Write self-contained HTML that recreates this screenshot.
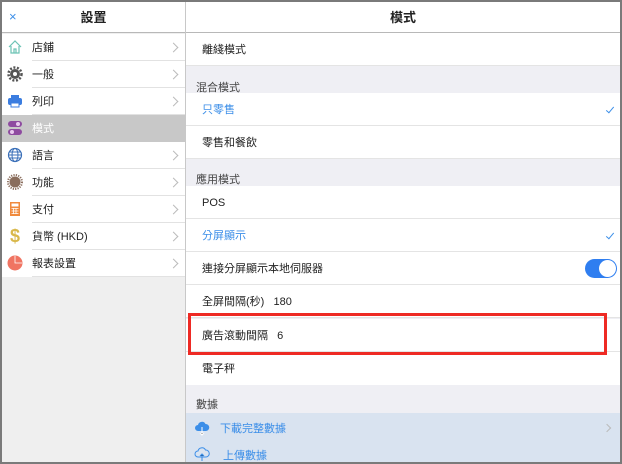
<!DOCTYPE html>
<html><head><meta charset="utf-8"><style>
*{margin:0;padding:0;box-sizing:border-box}
body{width:622px;height:464px;background:#7a7a7a;font-family:"Liberation Sans","Noto Sans CJK TC",sans-serif;font-size:11px;color:#222;position:relative;overflow:hidden}
.a{position:absolute}
#L{left:2px;top:2px;width:183px;height:460px;background:#efefef}
#R{left:186px;top:2px;width:434px;height:460px;background:#efeff4}
.hd{position:absolute;left:0;top:0;width:100%;height:31px;background:#fff;border-bottom:1px solid #b8b8b8;text-align:center;line-height:31px;font-size:13px;font-weight:bold;color:#222}
.lr{position:absolute;left:0;width:183px;height:27px;background:#fff}
.lr .t{position:absolute;left:30px;top:1px;line-height:27px}
.lr .ln{position:absolute;left:30px;right:0;bottom:0;border-bottom:1px solid #e2e2e2}
.lr .ch{position:absolute;right:8px;top:10px;width:7px;height:7px;border-right:1px solid #bbb;border-top:1px solid #bbb;transform:rotate(45deg)}
.lr .ic{position:absolute;left:5px;top:5px;width:16px;height:16px}
.rr{position:absolute;left:0;width:434px;height:33px;background:#fff;border-bottom:1px solid #e4e4e4}
.rr .t{position:absolute;left:16px;top:1px;line-height:33px}
.sh{position:absolute;left:10px;color:#444}
.blue{color:#3b8ee8}
.ck{position:absolute;right:8px;top:12px;width:4px;height:8px;border-right:1.5px solid #3b8ee8;border-bottom:1.5px solid #3b8ee8;transform:rotate(40deg)}
</style></head><body>
<div id="L" class="a">
 <div class="hd">設置</div>
 <div class="a" style="left:7px;top:7px;color:#3b8ee8;font-size:13px">×</div>
 <div class="lr" style="top:32px"><svg class="ic" viewBox="0 0 16 16"><path d="M2 8L8 2l6 6M4 7v7h8V7M7 14v-4h2v4" fill="none" stroke="#6cc3b5" stroke-width="1.2"/></svg><span class="t">店鋪</span><span class="ch"></span><span class="ln"></span></div>
 <div class="lr" style="top:59px"><svg class="ic" viewBox="0 0 16 16"><circle cx="8" cy="8" r="5" fill="#555"/><circle cx="8" cy="8" r="6.5" fill="none" stroke="#555" stroke-width="2.5" stroke-dasharray="2 1.6"/><circle cx="8" cy="8" r="2" fill="#fff"/></svg><span class="t">一般</span><span class="ch"></span><span class="ln"></span></div>
 <div class="lr" style="top:86px"><svg class="ic" viewBox="0 0 16 16"><rect x="4" y="2" width="8" height="4" fill="#3b7de0"/><rect x="1" y="5" width="14" height="7" rx="2" fill="#3b7de0"/><rect x="4" y="10" width="8" height="4" fill="#fff" stroke="#3b7de0"/></svg><span class="t">列印</span><span class="ch"></span><span class="ln"></span></div>
 <div class="lr" style="top:113px;background:#c8c8c8"><svg class="ic" viewBox="0 0 16 16"><rect x="1" y="1" width="14" height="6" rx="3" fill="#8e4aa0"/><rect x="1" y="9" width="14" height="6" rx="3" fill="#8e4aa0"/><circle cx="11" cy="4" r="2" fill="#e9c9ef"/><circle cx="5" cy="12" r="2" fill="#e9c9ef"/></svg><span class="t" style="color:#fff">模式</span></div>
 <div class="lr" style="top:140px"><svg class="ic" viewBox="0 0 16 16"><circle cx="8" cy="8" r="6.5" fill="none" stroke="#3a6fb8" stroke-width="1.2"/><ellipse cx="8" cy="8" rx="3" ry="6.5" fill="none" stroke="#3a6fb8"/><path d="M1.5 8h13M2.5 5h11M2.5 11h11" stroke="#3a6fb8"/></svg><span class="t">語言</span><span class="ch"></span><span class="ln"></span></div>
 <div class="lr" style="top:167px"><svg class="ic" viewBox="0 0 16 16"><circle cx="8" cy="8" r="5.5" fill="#8a6d5c"/><circle cx="8" cy="8" r="7" fill="none" stroke="#8a6d5c" stroke-width="2" stroke-dasharray="1.2 1.2"/></svg><span class="t">功能</span><span class="ch"></span><span class="ln"></span></div>
 <div class="lr" style="top:194px"><svg class="ic" viewBox="0 0 16 16"><rect x="3" y="1" width="10" height="14" fill="#f08a3c"/><rect x="4.5" y="2.5" width="7" height="3" fill="#fff"/><path d="M4.5 7.5h7M4.5 10h7M4.5 12.5h7M6.5 7v6M9 7v6" stroke="#fff" stroke-width=".8"/></svg><span class="t">支付</span><span class="ch"></span><span class="ln"></span></div>
 <div class="lr" style="top:221px"><span class="ic" style="color:#d9b84a;font-size:18px;font-weight:bold;line-height:16px;text-align:center;top:5px">$</span><span class="t">貨幣 (HKD)</span><span class="ch"></span><span class="ln"></span></div>
 <div class="lr" style="top:248px"><svg class="ic" viewBox="0 0 16 16"><circle cx="8" cy="8" r="7.5" fill="#f07462"/><path d="M8 1v7h7" fill="none" stroke="#fff" stroke-width=".8"/></svg><span class="t">報表設置</span><span class="ch"></span><span class="ln"></span></div>
</div>
<div class="a" style="left:185px;top:2px;width:1px;height:460px;background:#c8c8c8"></div>
<div id="R" class="a">
 <div class="hd">模式</div>
 <div class="rr" style="top:31px"><span class="t">離綫模式</span></div>
 <div class="sh" style="top:77px">混合模式</div>
 <div class="rr" style="top:91px"><span class="t blue">只零售</span><span class="ck"></span></div>
 <div class="rr" style="top:124px"><span class="t">零售和餐飲</span></div>
 <div class="sh" style="top:169px">應用模式</div>
 <div class="rr" style="top:184px"><span class="t">POS</span></div>
 <div class="rr" style="top:217px"><span class="t blue">分屏顯示</span><span class="ck"></span></div>
 <div class="rr" style="top:250px"><span class="t">連接分屏顯示本地伺服器</span><div class="a" style="right:3px;top:7px;width:32px;height:19px;border-radius:10px;background:#2f7ef0"><div class="a" style="right:1px;top:1px;width:17px;height:17px;border-radius:50%;background:#fff"></div></div></div>
 <div class="rr" style="top:283px"><span class="t">全屏間隔(秒)&nbsp;&nbsp;&nbsp;180</span></div>
 <div class="rr" style="top:317px"><span class="t">廣告滾動間隔&nbsp;&nbsp;&nbsp;6</span></div>
 <div class="rr" style="top:350px;border-bottom:none"><span class="t">電子秤</span></div>
 <div class="sh" style="top:394px">數據</div>
 <div class="a" style="left:0;top:411px;width:434px;height:49px;background:#d9e3f0"></div>
 <svg class="a" style="left:8px;top:418px" width="16" height="16" viewBox="0 0 16 16"><path d="M4 11a3 3 0 010-6 4 4 0 017.5-1A3.5 3.5 0 0112 11z" fill="#3b8ee8"/><path d="M8 7v8M6 13l2 2 2-2" stroke="#fff" stroke-width="1"/></svg>
 <div class="a blue" style="left:34px;top:418px">下載完整數據</div>
 <div class="a" style="right:10px;top:423px;width:6px;height:6px;border-right:1px solid #bbb;border-top:1px solid #bbb;transform:rotate(45deg)"></div>
 <svg class="a" style="left:8px;top:444px" width="16" height="16" viewBox="0 0 16 16"><path d="M4 11a3 3 0 010-6 4 4 0 017.5-1A3.5 3.5 0 0112 11z" fill="none" stroke="#3b8ee8"/><path d="M8 15V8M6 10l2-2 2 2" stroke="#3b8ee8"/></svg>
 <div class="a blue" style="left:37px;top:445px">上傳數據</div>
</div>
<div class="a" style="left:188px;top:313px;width:419px;height:42px;border:3px solid #ee2a24"></div>
</body></html>
